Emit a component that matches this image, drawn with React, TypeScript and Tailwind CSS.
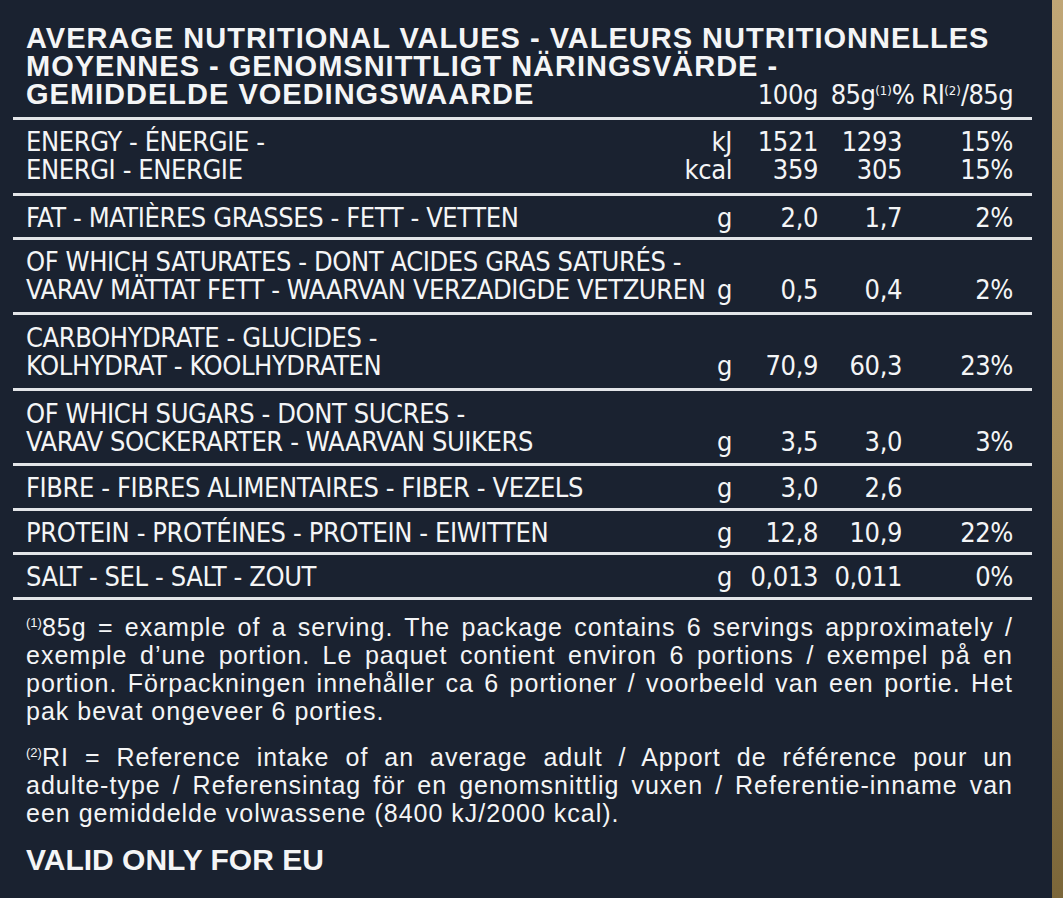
import React from "react";

type RowProps = {
  label: string[];
  units: string[];
  v1: string[];
  v2: string[];
  v3: string[];
  pad: string;
};

const narrow = "font-['Liberation_Sans_Narrow','Arial_Narrow','DejaVu_Sans_Condensed',sans-serif]";
const wide = "font-['Liberation_Sans',Arial,sans-serif]";

const rows: RowProps[] = [
  {
    label: ["ENERGY - ÉNERGIE -", "ENERGI - ENERGIE"],
    units: ["kJ", "kcal"],
    v1: ["1521", "359"],
    v2: ["1293", "305"],
    v3: ["15%", "15%"],
    pad: "pt-2 pb-[9px]",
  },
  {
    label: ["FAT - MATIÈRES GRASSES - FETT - VETTEN"],
    units: ["g"],
    v1: ["2,0"],
    v2: ["1,7"],
    v3: ["2%"],
    pad: "pt-2 pb-[5px]",
  },
  {
    label: ["OF WHICH SATURATES - DONT ACIDES GRAS SATURÉS -", "VARAV MÄTTAT FETT - WAARVAN VERZADIGDE VETZUREN"],
    units: ["g"],
    v1: ["0,5"],
    v2: ["0,4"],
    v3: ["2%"],
    pad: "pt-2 pb-[8px]",
  },
  {
    label: ["CARBOHYDRATE - GLUCIDES -", "KOLHYDRAT - KOOLHYDRATEN"],
    units: ["g"],
    v1: ["70,9"],
    v2: ["60,3"],
    v3: ["23%"],
    pad: "pt-[9px] pb-2",
  },
  {
    label: ["OF WHICH SUGARS - DONT SUCRES -", "VARAV SOCKERARTER - WAARVAN SUIKERS"],
    units: ["g"],
    v1: ["3,5"],
    v2: ["3,0"],
    v3: ["3%"],
    pad: "pt-[9px] pb-[7px]",
  },
  {
    label: ["FIBRE - FIBRES ALIMENTAIRES - FIBER - VEZELS"],
    units: ["g"],
    v1: ["3,0"],
    v2: ["2,6"],
    v3: [""],
    pad: "pt-2 pb-[6px]",
  },
  {
    label: ["PROTEIN - PROTÉINES - PROTEIN - EIWITTEN"],
    units: ["g"],
    v1: ["12,8"],
    v2: ["10,9"],
    v3: ["22%"],
    pad: "pt-2 pb-[5px]",
  },
  {
    label: ["SALT - SEL - SALT - ZOUT"],
    units: ["g"],
    v1: ["0,013"],
    v2: ["0,011"],
    v3: ["0%"],
    pad: "pt-2 pb-[6px]",
  },
];

const Lines = ({ items, className = "" }: { items: string[]; className?: string }) => (
  <div className={className}>
    {items.map((t, i) => (
      <div key={i} className="h-[28px] whitespace-nowrap">
        {t}
      </div>
    ))}
  </div>
);

const NutrientRow = ({ label, units, v1, v2, v3, pad }: RowProps) => (
  <div className={`flex items-end border-b-[3px] border-[#e3e5e8] pl-[13px] pr-[19px] ${pad}`}>
    <Lines items={label} className="min-w-0 flex-1" />
    <div className="flex shrink-0 text-right">
      <Lines items={units} />
      <Lines items={v1} className="w-[86px]" />
      <Lines items={v2} className="w-[84px]" />
      <Lines items={v3} className="w-[111px]" />
    </div>
  </div>
);

const Sup = ({ n }: { n: string }) => (
  <span className="relative -top-[9px] text-[13px] leading-none tracking-normal">({n})</span>
);

const Justified = ({ children }: { children: React.ReactNode }) => (
  <div className="text-justify [text-align-last:justify]">{children}</div>
);

export default function App() {
  return (
    <div className="flex min-h-[898px] w-full bg-[#1a2230] text-[#f4f5f6]">
      <div className="flex-1 pl-[13px]">
        <div className="w-[1019px]">
          {/* title */}
          <div className="border-b-[3px] border-[#e3e5e8] pl-[13px] pr-[19px] pt-[24px] pb-[8px]">
            <div className={`${wide} text-[29px] font-bold leading-[28px] tracking-[1px]`}>
              <div>AVERAGE NUTRITIONAL VALUES - VALEURS NUTRITIONNELLES</div>
              <div>MOYENNES - GENOMSNITTLIGT NÄRINGSVÄRDE -</div>
              <div className="flex items-baseline">
                <div className="flex-1">GEMIDDELDE VOEDINGSWAARDE</div>
                <div className={`${narrow} w-[86px] text-right text-[27px] font-normal tracking-[-0.4px]`}>100g</div>
                <div className={`${narrow} w-[195px] text-right text-[27px] font-normal tracking-[-0.6px]`}>
                  85g<Sup n="1" />% RI<Sup n="2" />/85g
                </div>
              </div>
            </div>
          </div>

          {/* table */}
          <div className={`${narrow} text-[27px] leading-[28px] tracking-[-0.4px]`}>
            {rows.map((r, i) => (
              <NutrientRow key={i} {...r} />
            ))}
          </div>

          {/* footnotes */}
          <div className={`${wide} pl-[13px] pr-[19px] pt-[13px] text-[25px] leading-[28px] tracking-[1px]`}>
            <Justified>
              <Sup n="1" />85g = example of a serving. The package contains 6 servings approximately /
            </Justified>
            <Justified>exemple d’une portion. Le paquet contient environ 6 portions / exempel på en</Justified>
            <Justified>portion. Förpackningen innehåller ca 6 portioner / voorbeeld van een portie. Het</Justified>
            <div>pak bevat ongeveer 6 porties.</div>

            <div className="mt-[18px]">
              <Justified>
                <Sup n="2" />RI = Reference intake of an average adult / Apport de référence pour un
              </Justified>
              <Justified>adulte-type / Referensintag för en genomsnittlig vuxen / Referentie-inname van</Justified>
              <div>een gemiddelde volwassene (8400 kJ/2000 kcal).</div>
            </div>

            <div className="mt-[18px] text-[30px] font-bold leading-[30px] tracking-normal">VALID ONLY FOR EU</div>
          </div>
        </div>
      </div>
      <div className="w-[11px] bg-gradient-to-b from-[#c0a676] via-[#a88f5c] to-[#7b6639]" />
    </div>
  );
}
